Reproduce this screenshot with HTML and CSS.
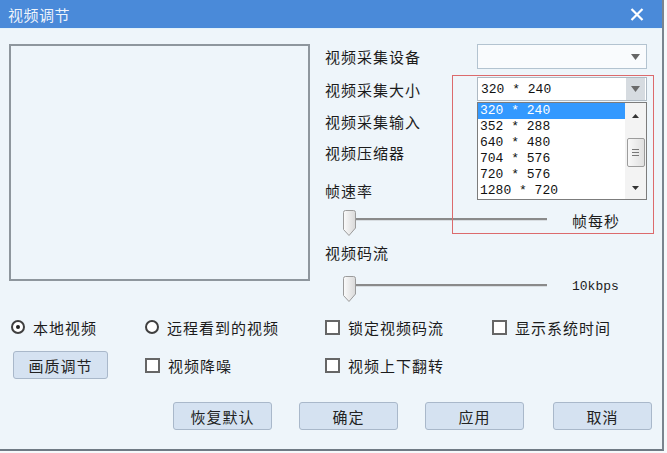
FILE: index.html
```html
<!DOCTYPE html>
<html lang="zh-CN">
<head>
  <meta charset="UTF-8">
  <title>视频调节</title>
  <link rel="stylesheet" href="styles.css">
</head>
<body>
<div class="window">
  <div class="titlebar">
    <span class="title">视频调节</span>
    <svg class="close" width="14" height="13" viewBox="0 0 14 13">
      <path d="M1.5 1 L12.5 12 M12.5 1 L1.5 12" stroke="#fff" stroke-width="2.2" fill="none"/>
    </svg>
  </div>

  <div class="content">
    <div class="top">
      <div class="preview"></div>

      <div class="settings">
        <div class="field f1">
          <span class="label">视频采集设备</span>
          <div class="combo">
            <span class="combo-text"></span>
            <span class="combo-btn">
              <svg width="9" height="6" viewBox="0 0 9 6"><path d="M0 0 H9 L4.5 6 Z" fill="#666"/></svg>
            </span>
          </div>
        </div>

        <div class="field f2">
          <span class="label">视频采集大小</span>
          <div class="combo open">
            <span class="combo-text mono">320 * 240</span>
            <span class="combo-btn pressed">
              <svg width="9" height="6" viewBox="0 0 9 6"><path d="M0 0 H9 L4.5 6 Z" fill="#6a6a6a"/></svg>
            </span>
            <div class="droplist">
              <ul class="items mono">
                <li class="selected">320 * 240</li>
                <li>352 * 288</li>
                <li>640 * 480</li>
                <li>704 * 576</li>
                <li>720 * 576</li>
                <li>1280 * 720</li>
              </ul>
              <div class="scrollbar">
                <svg class="sb-arrow" width="7" height="4" viewBox="0 0 7 4"><path d="M0 4 H7 L3.5 0 Z" fill="#333"/></svg>
                <div class="sb-thumb"><span></span><span></span><span></span></div>
                <svg class="sb-arrow" width="7" height="4" viewBox="0 0 7 4"><path d="M0 0 H7 L3.5 4 Z" fill="#333"/></svg>
              </div>
            </div>
          </div>
        </div>

        <div class="field f3"><span class="label">视频采集输入</span></div>
        <div class="field f4"><span class="label">视频压缩器</span></div>
        <div class="field f5"><span class="label">帧速率</span></div>

        <div class="slider-row s1">
          <div class="track">
            <span class="line"></span>
            <svg class="thumb" width="13" height="26" viewBox="0 0 13 26">
              <defs>
                <linearGradient id="tg" x1="0" y1="0" x2="1" y2="0">
                  <stop offset="0" stop-color="#fbfbfb"/>
                  <stop offset="1" stop-color="#d9d9d9"/>
                </linearGradient>
              </defs>
              <path d="M2.5 0.5 H10.5 Q12.5 0.5 12.5 2.5 V18 L6 25.5 L0.5 19.5 V2.5 Q0.5 0.5 2.5 0.5 Z" fill="url(#tg)" stroke="#9b9b9b"/>
            </svg>
          </div>
          <span class="unit">帧每秒</span>
        </div>

        <div class="field f6"><span class="label">视频码流</span></div>

        <div class="slider-row s2">
          <div class="track">
            <span class="line"></span>
            <svg class="thumb" width="13" height="26" viewBox="0 0 13 26">
              <path d="M2.5 0.5 H10.5 Q12.5 0.5 12.5 2.5 V18 L6 25.5 L0.5 19.5 V2.5 Q0.5 0.5 2.5 0.5 Z" fill="url(#tg)" stroke="#9b9b9b"/>
            </svg>
          </div>
          <span class="unit mono">10kbps</span>
        </div>
      </div>
    </div>

    <div class="options">
      <label class="opt"><span class="radio checked"></span>本地视频</label>
      <label class="opt"><span class="radio"></span>远程看到的视频</label>
      <label class="opt"><span class="check"></span>锁定视频码流</label>
      <label class="opt"><span class="check"></span>显示系统时间</label>

      <div class="opt"><button class="btn quality">画质调节</button></div>
      <label class="opt"><span class="check"></span>视频降噪</label>
      <label class="opt"><span class="check"></span>视频上下翻转</label>
    </div>

    <div class="actions">
      <button class="btn">恢复默认</button>
      <button class="btn">确定</button>
      <button class="btn">应用</button>
      <button class="btn">取消</button>
    </div>
  </div>

  <div class="highlight"></div>
</div>
</body>
</html>
```

FILE: styles.css
```css
* { box-sizing: border-box; }
body {
  margin: 0;
  background: #f6f9fb;
  font-family: "Noto Sans CJK SC", "Noto Sans", sans-serif;
  color: #1c1c1c;
}
.window {
  position: relative;
  width: 664px;
  height: 451px;
  border-right: 2px solid #7a848e;
  border-bottom: 2px solid #6f7a84;
  background: #eef5fa;
  display: flex;
  flex-direction: column;
}
.titlebar {
  height: 29px;
  background: #4a8ad9;
  display: flex;
  align-items: center;
  justify-content: space-between;
  padding: 0 18px 0 8px;
  border-bottom: 1px solid #e2f2fb;
}
.title {
  color: rgba(255, 255, 255, 0.92);
  font-size: 15px;
  letter-spacing: 0.5px;
}
.close { display: block; margin-top: 1px; }

.content {
  flex: 1;
  padding-top: 15px;
}
.top { display: flex; }
.preview {
  margin-left: 9px;
  width: 301px;
  height: 237px;
  border: 2px solid #8e969d;
}
.settings {
  margin-left: 15px;
  display: flex;
  flex-direction: column;
}
.field {
  display: flex;
  align-items: center;
  height: 24px;
}
.label {
  width: 152px;
  font-size: 15px;
  letter-spacing: 1px;
  line-height: 1;
}
.f1 { height: 25px; }
.f2 { margin-top: 8px; }
.f3 { margin-top: 8px; }
.f4 { margin-top: 7px; }
.f5 { margin-top: 14px; }
.f6 { margin-top: 5px; }

.mono { font-family: "Liberation Mono", "DejaVu Sans Mono", monospace; }

.combo {
  position: relative;
  width: 170px;
  height: 100%;
  border: 1px solid #b3c3d0;
  background: #f9fbfd;
  display: flex;
  align-items: center;
}
.combo.open {
  background: #fff;
  border-color: #aeb9c3;
}
.combo-text {
  flex: 1;
  padding-left: 3px;
  font-size: 13px;
  color: #111;
}
.combo-btn {
  width: 19px;
  height: 100%;
  display: flex;
  align-items: center;
  justify-content: center;
  margin-right: 1px;
}
.combo-btn.pressed {
  background: #d6dbe0;
  height: 22px;
}
.combo-btn svg { display: block; }

.droplist {
  position: absolute;
  top: calc(100% + 2px);
  left: -1px;
  width: 170px;
  height: 98px;
  border: 1px solid #7c7c7c;
  background: #fff;
  display: flex;
  z-index: 2;
}
.items {
  list-style: none;
  margin: 0;
  padding: 0;
  flex: 1;
  font-size: 13px;
}
.items li {
  height: 16px;
  line-height: 16px;
  padding-left: 2px;
  color: #111;
}
.items li.selected {
  background: #3399ff;
  color: #fff;
}
.scrollbar {
  width: 21px;
  background: #f3f3f3;
  display: flex;
  flex-direction: column;
  align-items: center;
  padding: 11px 0 9px;
}
.sb-arrow { display: block; }
.sb-thumb {
  margin-top: 20px;
  width: 18px;
  height: 29px;
  border: 1px solid #9c9c9c;
  border-radius: 2px;
  background: linear-gradient(to right, #f8f8f8, #e0e0e0);
  display: flex;
  flex-direction: column;
  align-items: center;
  justify-content: center;
  gap: 2px;
}
.sb-thumb span {
  width: 7px;
  height: 1px;
  background: #777;
}
.scrollbar .sb-arrow:last-child { margin-top: auto; }

.slider-row {
  display: flex;
  align-items: center;
  height: 30px;
}
.s1 { margin-top: 3px; }
.s2 { margin-top: 7px; }
.track {
  position: relative;
  margin-left: 18px;
  width: 204px;
  height: 30px;
}
.track .line {
  position: absolute;
  left: 6px;
  right: 0;
  top: 13px;
  height: 2px;
  background: #8a8a8a;
  border-bottom: 1px solid #d8dde1;
  box-sizing: content-box;
}
.track .thumb {
  position: absolute;
  left: 0;
  top: 5px;
}
.unit {
  margin-left: 25px;
  font-size: 15px;
  letter-spacing: 1px;
}
.unit.mono { font-size: 13px; letter-spacing: 0; }

.options {
  margin-top: 16px;
  padding-left: 11px;
  display: grid;
  grid-template-columns: 134px 180px 167px auto;
  grid-template-rows: 20px 28px;
  row-gap: 14px;
}
.opt {
  display: flex;
  align-items: center;
  gap: 8px;
  font-size: 15px;
  letter-spacing: 1px;
}
.radio {
  width: 14px;
  height: 14px;
  border: 2px solid #3f3f3f;
  border-radius: 50%;
  background: #fff;
  display: flex;
  align-items: center;
  justify-content: center;
}
.radio.checked::after {
  content: "";
  width: 4px;
  height: 4px;
  border-radius: 50%;
  background: #222;
}
.check {
  width: 15px;
  height: 15px;
  border: 2px solid #666;
  background: #fff;
}

.btn {
  height: 28px;
  border: 1px solid #a9b8ca;
  border-radius: 3px;
  background: #d5e2f1;
  font-family: "Noto Sans CJK SC", "Noto Sans", sans-serif;
  font-size: 15px;
  letter-spacing: 1px;
  color: #222;
  padding: 0;
}
.btn.quality {
  margin-left: 2px;
  width: 95px;
}
.actions {
  margin-top: 23px;
  padding-left: 173px;
  display: flex;
  gap: 27px;
}
.actions .btn { width: 99px; }
.actions .btn:nth-child(4) { margin-left: 2px; }

.highlight {
  position: absolute;
  left: 452px;
  top: 75px;
  width: 202px;
  height: 159px;
  border: 1.5px solid #dc6a6c;
  pointer-events: none;
  z-index: 3;
}
```
